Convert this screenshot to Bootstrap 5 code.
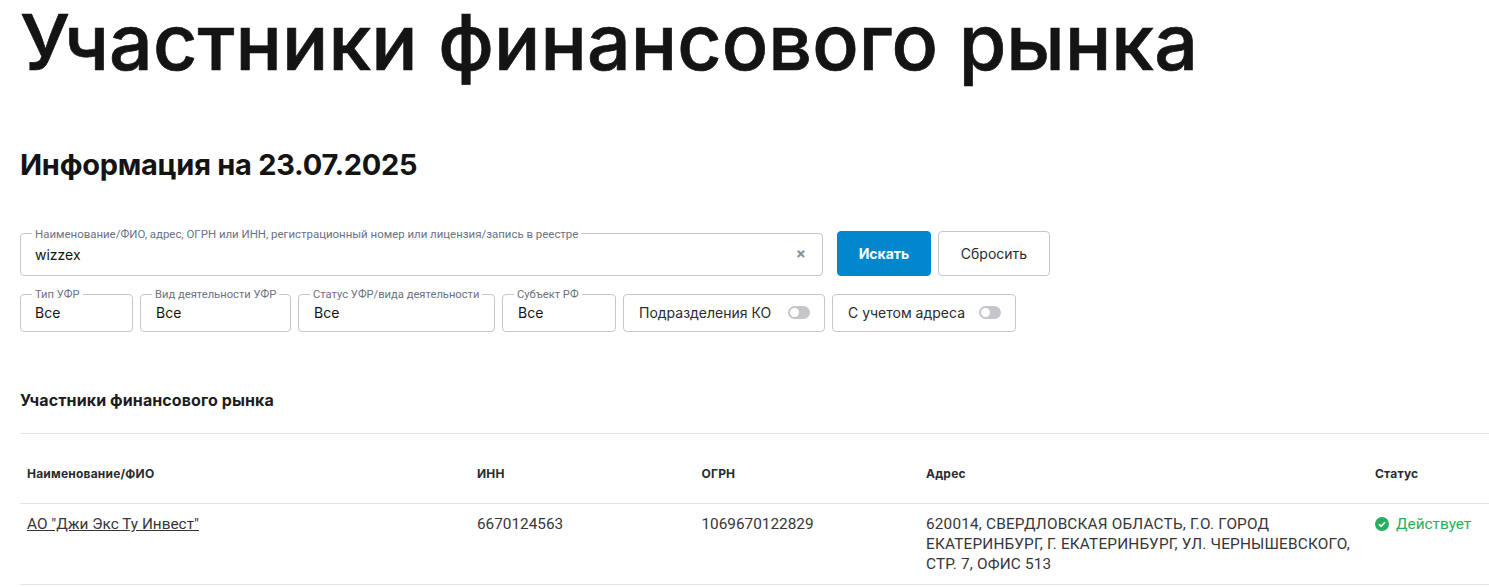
<!DOCTYPE html>
<html lang="ru">
<head>
<meta charset="utf-8">
<title>Участники финансового рынка</title>
<link href="https://cdn.jsdelivr.net/npm/bootstrap@5.3.0/dist/css/bootstrap.min.css" rel="stylesheet">
<style>
html,body{overflow:hidden;height:587px}
body{font-family:Inter,"Noto Sans",sans-serif;color:#1c1c1e;background:#fff}
.page-wrap{padding:0 0 0 20px}
.big-title{font-family:Inter,"Noto Sans",sans-serif;font-size:77px;line-height:85px;font-weight:500;-webkit-text-stroke:.7px #141414;color:#141414;margin:0;letter-spacing:.1px;white-space:nowrap}
.info-title{font-size:29px;line-height:36px;font-weight:700;color:#141414;margin:62px 0 48px;letter-spacing:-.26px}
.fbox{position:relative;border:1px solid #c4c6cc;border-radius:4px;background:#fff;height:38px;padding:0 14px 1px 15px;display:flex;align-items:center;font-size:14px;color:#141414}
.fbox-plain:first-child{padding-left:14px}
.fbox-main{width:803px;height:43px;justify-content:space-between;padding:0 15px 1px 14px}
.flabel{position:absolute;top:-6px;left:11px;background:#fff;padding:0 3px;font-family:Roboto,sans-serif;font-size:11.2px;line-height:12px;color:#6b7280;white-space:nowrap}
.fbox-main .flabel{font-size:11.45px}
.clear-x{color:#8b8f98;font-size:15px;font-weight:700;line-height:1;margin-top:-2px;margin-right:1px}
.btn-find,.btn-reset{height:45px;border-radius:4px;font-size:14px;display:flex;align-items:center;justify-content:center;padding:0}
.btn-find{width:94px;background:#0087cd;border:1px solid #0087cd;color:#fff;font-weight:700;margin-left:14px}
.btn-reset{width:112px;background:#fff;border:1px solid #c4c6cc;color:#2b2b2e;margin-left:7px}
.toggle-box{color:#2b2b2e;justify-content:space-between;white-space:nowrap}
.tg{width:22px;height:13px;border-radius:7px;background:#c4c6cc;position:relative;flex:none}
.tg::after{content:"";position:absolute;left:2px;top:2px;width:9px;height:9px;border-radius:50%;background:#fff}
.filter-row{gap:7px;margin-top:18px}
.sec-title{font-size:16px;line-height:20px;font-weight:700;color:#1c1c1e;margin:58px 0 23px;letter-spacing:.1px}
.tbl{table-layout:fixed;width:1469px;margin:0;font-size:14px;border-top:1px solid #e4e5e8}
.tbl th,.tbl td{border-color:#e4e5e8;color:#36363a;padding:0 7px}
.tbl th{font-size:12px;font-weight:700;height:70px;vertical-align:middle;color:#2b2b2e;padding-top:11px;letter-spacing:.2px}
.tbl td{padding-top:10px;padding-bottom:10px;font-family:Roboto,sans-serif;font-size:15.35px;line-height:20px;height:81px;vertical-align:top}
.tbl td.addr{letter-spacing:.18px}
.tbl a{color:#36363a}
.st-ok{color:#27ae60;display:flex;align-items:center;gap:7px;white-space:nowrap}
.filter-w1{width:113px}.filter-w2{width:151px}.filter-w3{width:197px}.filter-w4{width:114px}.filter-w5{width:202px}.filter-w6{width:184px}
.c1{width:450px}.c2{width:224.5px}.c1b{width:449px}.c5{width:121px}
</style>
</head>
<body>
<div class="page-wrap">
  <h1 class="big-title">Участники финансового рынка</h1>
  <h2 class="info-title">Информация на 23.07.2025</h2>
  <div class="d-flex align-items-end">
    <div class="fbox fbox-main">
      <span class="flabel">Наименование/ФИО, адрес, ОГРН или ИНН, регистрационный номер или лицензия/запись в реестре</span>
      <span>wizzex</span><span class="clear-x">×</span>
    </div>
    <button class="btn btn-find" type="button">Искать</button>
    <button class="btn btn-reset" type="button">Сбросить</button>
  </div>
  <div class="d-flex filter-row">
    <div class="fbox fbox-plain filter-w1"><span class="flabel">Тип УФР</span>Все</div>
    <div class="fbox fbox-plain filter-w2"><span class="flabel">Вид деятельности УФР</span>Все</div>
    <div class="fbox fbox-plain filter-w3"><span class="flabel">Статус УФР/вида деятельности</span>Все</div>
    <div class="fbox fbox-plain filter-w4"><span class="flabel">Субъект РФ</span>Все</div>
    <div class="fbox toggle-box filter-w5">Подразделения КО<span class="tg"></span></div>
    <div class="fbox toggle-box filter-w6">С учетом адреса<span class="tg"></span></div>
  </div>
  <h3 class="sec-title">Участники финансового рынка</h3>
  <table class="table tbl">
    <colgroup><col class="c1"><col class="c2"><col class="c2"><col class="c1b"><col class="c5"></colgroup>
    <thead><tr><th>Наименование/ФИО</th><th>ИНН</th><th>ОГРН</th><th>Адрес</th><th>Статус</th></tr></thead>
    <tbody><tr>
      <td><a href="#">АО "Джи Экс Ту Инвест"</a></td>
      <td>6670124563</td>
      <td>1069670122829</td>
      <td class="addr">620014, СВЕРДЛОВСКАЯ ОБЛАСТЬ, Г.О. ГОРОД ЕКАТЕРИНБУРГ, Г. ЕКАТЕРИНБУРГ, УЛ. ЧЕРНЫШЕВСКОГО, СТР. 7, ОФИС 513</td>
      <td><span class="st-ok"><svg width="14" height="14" viewBox="0 0 14 14"><circle cx="7" cy="7" r="7" fill="#27ae60"/><path d="M4 7.2l2.1 2.1L10 5.2" fill="none" stroke="#fff" stroke-width="1.6"/></svg>Действует</span></td>
    </tr></tbody>
  </table>
</div>
</body>
</html>
